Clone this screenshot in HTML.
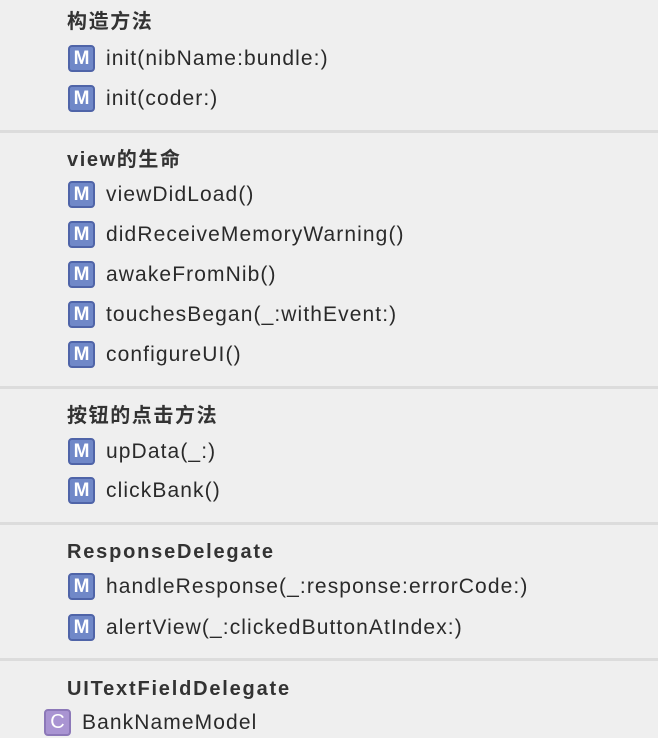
<!DOCTYPE html>
<html><head><meta charset="utf-8"><style>
body{margin:0;width:658px;height:738px;background:#efefef;position:relative;overflow:hidden;font-family:"Liberation Sans","Noto Sans CJK SC",sans-serif;color:#2a2a2a}
.h{position:absolute;left:67px;font-size:20px;font-weight:bold;line-height:24px;color:#333;letter-spacing:1.8px}
.hc{letter-spacing:1.6px;font-size:20px}
.i{position:absolute;left:106px;font-size:21px;line-height:24px;color:#2a2a2a;letter-spacing:1.1px}
.m{position:absolute;left:68px;width:23px;height:23px;border:2px solid #4f64a8;border-radius:4px;background:#7088c8;color:#fff;font-weight:bold;font-size:19px;line-height:23px;text-align:center}
.c{position:absolute;left:44px;width:23px;height:23px;border:2px solid #8c78b8;border-radius:4px;background:#a994d2;color:#fff;font-size:20px;line-height:23px;text-align:center}
.s{position:absolute;left:0;width:658px;height:3px;background:#dcdcdc}
</style></head><body>
<div class="h hc" style="top:10px">构造方法</div>
<div class="m" style="top:45px">M</div><div class="i" style="top:47px">init(nibName:bundle:)</div>
<div class="m" style="top:85px">M</div><div class="i" style="top:87px">init(coder:)</div>
<div class="s" style="top:130px"></div>
<div class="h hc" style="top:148px">view的生命</div>
<div class="m" style="top:181px">M</div><div class="i" style="top:183px">viewDidLoad()</div>
<div class="m" style="top:221px">M</div><div class="i" style="top:223px">didReceiveMemoryWarning()</div>
<div class="m" style="top:261px">M</div><div class="i" style="top:263px">awakeFromNib()</div>
<div class="m" style="top:301px">M</div><div class="i" style="top:303px">touchesBegan(_:withEvent:)</div>
<div class="m" style="top:341px">M</div><div class="i" style="top:343px">configureUI()</div>
<div class="s" style="top:386px"></div>
<div class="h hc" style="top:404px">按钮的点击方法</div>
<div class="m" style="top:438px">M</div><div class="i" style="top:440px">upData(_:)</div>
<div class="m" style="top:477px">M</div><div class="i" style="top:479px">clickBank()</div>
<div class="s" style="top:522px"></div>
<div class="h" style="top:540px">ResponseDelegate</div>
<div class="m" style="top:573px">M</div><div class="i" style="top:575px">handleResponse(_:response:errorCode:)</div>
<div class="m" style="top:614px">M</div><div class="i" style="top:616px">alertView(_:clickedButtonAtIndex:)</div>
<div class="s" style="top:658px"></div>
<div class="h" style="top:677px">UITextFieldDelegate</div>
<div class="c" style="top:709px">C</div><div class="i" style="left:82px;top:711px">BankNameModel</div>
</body></html>
